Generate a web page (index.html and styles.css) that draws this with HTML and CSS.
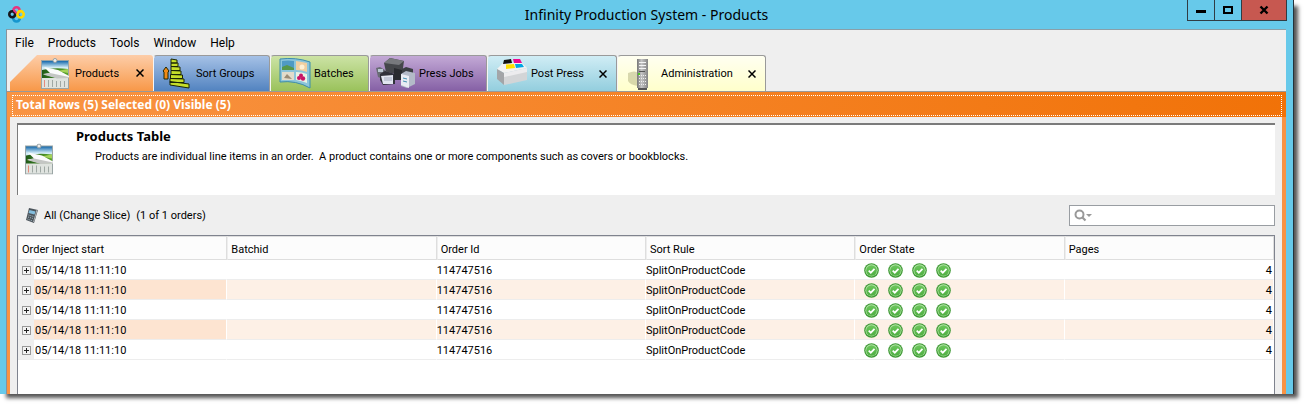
FILE: index.html
```html
<!DOCTYPE html>
<html lang="en">
<head>
<meta charset="utf-8">
<title>Infinity Production System - Products</title>
<link rel="stylesheet" href="styles.css">
</head>
<body>
<svg class="defs" aria-hidden="true">
  <defs>
    <linearGradient id="sky" x2="0" y2="1"><stop offset="0" stop-color="#1568ac"/><stop offset=".6" stop-color="#d4edf6"/></linearGradient>
    <linearGradient id="field"><stop offset="0" stop-color="#1f5a18"/><stop offset="1" stop-color="#5ca52c"/></linearGradient>
    <linearGradient id="ok-fill" x2="0" y2="1"><stop offset="0" stop-color="#6cc75c"/><stop offset="1" stop-color="#4fae42"/></linearGradient>
    <linearGradient id="metal"><stop offset="0" stop-color="#777"/><stop offset=".4" stop-color="#c4c4c4"/><stop offset="1" stop-color="#858585"/></linearGradient>
  </defs>
  <symbol id="calendar" viewBox="0 0 28 31">
    <path d="M0 2h28v29H0z" fill="#9aa5a5"/>
    <path d="M1 3h26v11H1z" fill="url(#sky)"/>
    <path d="M1 12q12-3 26-1v10H1z" fill="url(#field)"/>
    <path d="M16 13l11-2v4z" fill="#a5d25a"/>
    <path d="M1 20h26v10H1z" fill="#dfe3df"/>
    <path d="M7.500 22v7M11.500 22v7M15.500 23v6M19.500 23v6M23.500 23v6" stroke="#9fa8a4"/>
    <path d="M3.500 22v7" stroke="#e58a7c"/>
    <path d="M3 9l14 3 11 6v2l-12 0-14-4 7-1z" fill="#fbfbfb"/>
    <path d="M9 15l19 4v1l-12 .5-14-4z" fill="#c4c6c4"/>
    <circle cx="14" cy="2.500" r="2" fill="#eee" stroke="#96a0a3"/>
  </symbol>
  <symbol id="ok" viewBox="0 0 15 15">
    <circle cx="7.500" cy="7.500" r="7.300" fill="#3f9a35"/>
    <circle cx="7.500" cy="7.300" r="6.100" fill="#b4e3a8"/>
    <circle cx="7.500" cy="7.500" r="5.300" fill="url(#ok-fill)"/>
    <path d="M4.700 7.600l2.100 2.100 3.700-3.900" fill="none" stroke="#fff" stroke-width="1.700"/>
  </symbol>
  <symbol id="close" viewBox="0 0 8 8">
    <path d="M.5.5l7 7M7.500.5l-7 7" stroke="#000" stroke-width="1.500"/>
  </symbol>
</svg>

<div class="window">
  <header class="titlebar">
    <svg class="app-logo" viewBox="0 0 16 16" aria-hidden="true">
      <g fill="none" stroke-width="2.400">
        <circle cx="8" cy="11.400" r="3.200" stroke="#1696cf"/>
        <circle cx="8" cy="4.200" r="3" stroke="#e7347f"/>
        <circle cx="4" cy="7.800" r="2.800" stroke="#16171c"/>
        <circle cx="11.800" cy="7.800" r="3" stroke="#ffd800"/>
      </g>
      <path d="M5 4.800Q7 4 7.500 7" fill="none" stroke="#e7347f" stroke-width="2"/>
    </svg>
    <h1 class="title">Infinity Production System - Products</h1>
    <div class="window-buttons">
      <button class="win-btn" aria-label="Minimize"><svg width="10" height="10"><path d="M0 5h10v3H0z"/></svg></button>
      <button class="win-btn" aria-label="Maximize"><svg width="10" height="10"><path d="M1 2h8v6H1z" fill="none" stroke="#000" stroke-width="2"/></svg></button>
      <button class="win-btn win-close" aria-label="Close"><svg width="10" height="10"><path d="M1.500 1.500l7 7M8.500 1.500l-7 7" stroke="#000" stroke-width="2.400"/></svg></button>
    </div>
  </header>

  <div class="client">
    <nav class="menubar" aria-label="Main menu">
      <button>File</button><button>Products</button><button>Tools</button><button>Window</button><button>Help</button>
    </nav>

    <div class="tabs">
      <div class="tab tab-products">
        <button class="tab-main"><svg class="tab-icon" viewBox="0 0 28 31"><use href="#calendar"/></svg>Products</button>
        <button class="tab-close" aria-label="Close Products"><svg><use href="#close"/></svg></button>
      </div>
      <div class="tab tab-sort">
        <button class="tab-main"><svg class="tab-icon" viewBox="0 0 28 31">
          <g stroke="#1c2606" fill="#c6de2a" stroke-linejoin="round">
            <path d="M9 1l6 1v3H9zM9 5l7 0v3.500H9zM9 8.500l9 .5v3.500H9zM9 12.500l10 .5v3.500H9zM8.500 16.500l12 .5v3.500h-12zM8 20.500l14 .5v3.500H8zM8 23.500l19 2.500v4l-19-3z"/>
            <path d="M1 13l3-4 3 4-1 1v7H2v-7z" fill="#f18a16"/>
          </g></svg>Sort Groups</button>
      </div>
      <div class="tab tab-batches">
        <button class="tab-main"><svg class="tab-icon tab-icon-wide" viewBox="0 0 32 31">
          <path d="M1 1q16-2 30 3v26q-14-8-30-6z" fill="#8cc5da" stroke="#3b8bae"/>
          <path d="M3 3q6-1 12 0v9H3z" fill="#4f9ac4"/><path d="M3 9l5-2 7 3v2H3z" fill="#57984a"/>
          <path d="M17 3q6 1 11 2v9q-5-2-11-2z" fill="#f1cfa0"/><circle cx="23" cy="9" r="2.500" fill="#fff0d4"/>
          <path d="M3 14h12v8H3z" fill="#e2dccb"/><path d="M5 20l3-4 5 5z" fill="#9b8c75"/>
          <path d="M17 14q6 0 11 2v9q-5-2-11-3z" fill="#e9f2e4"/>
          <g fill="#c81465"><circle cx="22" cy="17.500" r="2"/><circle cx="20" cy="20" r="2"/><circle cx="24" cy="20.500" r="2.200"/></g>
        </svg>Batches</button>
      </div>
      <div class="tab tab-press">
        <button class="tab-main"><svg class="tab-icon tab-icon-press" viewBox="0 0 40 31">
          <path d="M8 5l6-5 14 3-2 14-16-3z" fill="#45474b"/><path d="M8 5l6-5 14 3-5 4z" fill="#77797d"/>
          <path d="M0 10l4-1 8 5-3 8-7-3z" fill="#686b74"/><path d="M2 11h5v3H2z" fill="#bac8d2"/>
          <path d="M4 16l5-3 10 3v10l-12 1-3-5z" fill="#30323a"/><path d="M5 18l12-1v9H7z" fill="#e1e5ef"/><path d="M8 20h8M8 22h8" stroke="#a3acc0"/>
          <path d="M18 10l8 2v10h-8z" fill="#292b2f"/>
          <path d="M26 11l4-2 7 2v6l-11-2z" fill="#3b3e43"/>
          <path d="M25 16l5-3 9 2v11l-8 4-6-2z" fill="#b3bac8"/><path d="M25 16l8 2v12l-8-3z" fill="#e9ecf3"/>
          <path d="M27 20l4 1M27 23l4 1" stroke="#4590b2"/>
        </svg>Press Jobs</button>
      </div>
      <div class="tab tab-post">
        <button class="tab-main"><svg class="tab-icon tab-icon-wide" viewBox="0 0 32 31">
          <path d="M1 11l6-6 19 0 5 5-23 5z" fill="#f2f2f2"/>
          <path d="M1 11l7 4v12l-7-6z" fill="#a3a5a8"/><path d="M8 15l23-5v12L8 27z" fill="#d3d5d7"/>
          <path d="M8 15l23-5v4L8 19z" fill="#ececee"/>
          <path d="M8 2l7-1 1 4-9 1z" fill="#111"/><path d="M17 1l7 0 2 4-8 0z" fill="#ec0a91"/>
          <path d="M10 6.500l8-.5 1 4-9 1z" fill="#ffe000"/><path d="M19 6l7 0 2 3-8 1z" fill="#00a6e2"/>
        </svg>Post Press</button>
        <button class="tab-close" aria-label="Close Post Press"><svg><use href="#close"/></svg></button>
      </div>
      <div class="tab tab-admin">
        <button class="tab-main"><svg class="tab-icon tab-icon-tower" viewBox="0 0 20 32">
          <path d="M0 15q7-3 10 0v13Q2 27 0 23z" fill="#a9a875" opacity=".45"/>
          <path d="M9 1h11v29H9z" fill="url(#metal)"/><path d="M10 30h9v2h-9z" fill="#555"/>
          <path d="M11 4.500h7M11 7.500h7M11 10.500h7" stroke="#f4f4f4"/><path d="M11 13.500h6" stroke="#555"/>
          <path d="M11 17.500h7M11 20.500h7M11 23.500h7M11 26.500h7" stroke="#eee" stroke-dasharray="1 1"/>
          <path d="M10 15h2v2h-2z" fill="#4dc923"/>
        </svg>Administration</button>
        <button class="tab-close" aria-label="Close Administration"><svg><use href="#close"/></svg></button>
      </div>
    </div>

    <main class="workspace">
      <div class="status"><p>Total Rows (5) Selected (0) Visible (5)</p></div>
      <div class="content">
        <section class="info">
          <svg class="info-icon" viewBox="0 0 28 31" aria-hidden="true"><use href="#calendar"/></svg>
          <div>
            <h2>Products Table</h2>
            <p>Products are individual line items in an order.&nbsp; A product contains one or more components such as covers or bookblocks.</p>
          </div>
        </section>

        <div class="toolbar">
          <button class="slice">
            <svg width="12" height="15" viewBox="0 0 12 15" aria-hidden="true"><path d="M3 0l9 2-4 13-8-3z" fill="#4c545b"/><path d="M3.500 2l6 1.500-1 3-6-1.500z" fill="#83bddd"/><path d="M2.500 7l5 1.500M2 9l5 1.500M1.500 11l5 2" stroke="#a7bfca" stroke-dasharray="1 1"/><path d="M11 2L7.500 14" stroke="#b0b5b8"/></svg>
            All (Change Slice)
          </button>
          <span>(1 of 1 orders)</span>
          <label class="search">
            <svg width="18" height="13" viewBox="0 0 18 13" aria-hidden="true"><circle cx="5.500" cy="5.500" r="4" fill="none" stroke="#999" stroke-width="2"/><path d="M8.500 8.500l3 3" stroke="#999" stroke-width="2.200"/><path d="M12 5h6l-3 3z" fill="#999"/></svg>
            <input type="text" aria-label="Search products">
          </label>
        </div>

        <div class="grid">
          <table>
            <thead>
              <tr><th>Order Inject start</th><th>Batchid</th><th>Order Id</th><th>Sort Rule</th><th>Order State</th><th>Pages</th></tr>
            </thead>
            <tbody>
              <tr><td class="start"><button class="expand" aria-label="Expand row"></button>05/14/18 11:11:10</td><td></td><td>114747516</td><td>SplitOnProductCode</td><td><div class="states"><svg><use href="#ok"/></svg><svg><use href="#ok"/></svg><svg><use href="#ok"/></svg><svg><use href="#ok"/></svg></div></td><td class="pages">4</td></tr>
              <tr><td class="start"><button class="expand" aria-label="Expand row"></button>05/14/18 11:11:10</td><td></td><td>114747516</td><td>SplitOnProductCode</td><td><div class="states"><svg><use href="#ok"/></svg><svg><use href="#ok"/></svg><svg><use href="#ok"/></svg><svg><use href="#ok"/></svg></div></td><td class="pages">4</td></tr>
              <tr><td class="start"><button class="expand" aria-label="Expand row"></button>05/14/18 11:11:10</td><td></td><td>114747516</td><td>SplitOnProductCode</td><td><div class="states"><svg><use href="#ok"/></svg><svg><use href="#ok"/></svg><svg><use href="#ok"/></svg><svg><use href="#ok"/></svg></div></td><td class="pages">4</td></tr>
              <tr><td class="start"><button class="expand" aria-label="Expand row"></button>05/14/18 11:11:10</td><td></td><td>114747516</td><td>SplitOnProductCode</td><td><div class="states"><svg><use href="#ok"/></svg><svg><use href="#ok"/></svg><svg><use href="#ok"/></svg><svg><use href="#ok"/></svg></div></td><td class="pages">4</td></tr>
              <tr><td class="start"><button class="expand" aria-label="Expand row"></button>05/14/18 11:11:10</td><td></td><td>114747516</td><td>SplitOnProductCode</td><td><div class="states"><svg><use href="#ok"/></svg><svg><use href="#ok"/></svg><svg><use href="#ok"/></svg><svg><use href="#ok"/></svg></div></td><td class="pages">4</td></tr>
            </tbody>
          </table>
        </div>
      </div>
    </main>
  </div>
</div>
</body>
</html>
```

FILE: styles.css
```css
* { box-sizing: border-box; }

body {
  margin: 0;
  height: 100vh;
  padding: 0 15px 15px 0;
  background: #fff;
  font: 11px/15px Roboto, "Noto Sans", sans-serif;
  color: #000;
  overflow: hidden;
}

h1, h2, p { margin: 0; }

button {
  margin: 0;
  padding: 0;
  border: 0;
  background: none;
  color: inherit;
  font: inherit;
}

.defs { position: absolute; width: 0; height: 0; }

.window {
  display: flex;
  flex-direction: column;
  height: 100%;
  background: #67c9ea;
  border-right: 1px solid #23333b;
  box-shadow: 5px 5px 4px -1px #555;
}

/* Title bar */
.titlebar {
  display: grid;
  grid-template-columns: 1fr auto 1fr;
  height: 29px;
  padding: 0 6px;
}

.app-logo { width: 17px; height: 17px; margin-top: 6px; margin-left: 2px; }

.title {
  font: 400 14px/30px "Noto Sans", "Open Sans", sans-serif;
}

.window-buttons { display: flex; justify-self: end; height: 21px; }

.win-btn {
  display: flex;
  align-items: center;
  justify-content: center;
  width: 27px;
  border: 1px solid #303c43;
  border-width: 0 0 1px 1px;
}

.win-close { width: 46px; border-right-width: 1px; background: #c75850; }

/* Client area */
.client {
  display: flex;
  flex: 1;
  flex-direction: column;
  min-height: 0;
  margin: 0 7px 0 6px;
  border-top: 1px solid #8a9fa8;
  border-left: 1px solid #8a929a;
  background: #efefef;
}

.menubar {
  display: flex;
  gap: 14px;
  height: 25px;
  padding-left: 8px;
  font-size: 12px;
  line-height: 24px;
}

/* Tabs */
.tabs {
  display: flex;
  height: 36px;
  padding-left: 3px;
}

.tab {
  display: flex;
  align-items: center;
  justify-content: space-between;
  border: 1px solid #9a9a9a;
  border-bottom: 0;
  border-left-color: #f5f5f5;
  border-radius: 4px 3px 0 0;
  padding-right: 9px;
}

.tab-main { display: flex; align-items: center; gap: 6px; white-space: nowrap; }
.tab-icon { width: 28px; height: 31px; }
.tab-icon-wide { width: 32px; }
.tab-icon-press { width: 40px; }
.tab-icon-tower { width: 20px; height: 32px; }
.tab-close, .tab-close svg { display: block; width: 8px; height: 8px; }

.tab-products {
  width: 143px;
  padding-left: 31px;
  border: 0;
  background: linear-gradient(#fdcda8, #f89848);
  clip-path: polygon(0 27px, 27px 0, 100% 0, 100% 100%, 0 100%);
}
.tab-sort { width: 117px; padding-left: 8px; background: linear-gradient(#a5c1e6, #5283c0); }
.tab-batches { width: 99px; padding-left: 8px; background: linear-gradient(#cce3a5, #9ac25b); }
.tab-batches .tab-main { gap: 3px; }
.tab-press { width: 118px; padding-left: 6px; background: linear-gradient(#c3a9d6, #8560a5); }
.tab-press .tab-main { gap: 3px; }
.tab-post { width: 130px; padding-left: 8px; background: linear-gradient(#d0edf5, #93cede); }
.tab-post .tab-main { gap: 3px; }
.tab-admin { width: 149px; padding-left: 10px; background: linear-gradient(#fffff1, #ffffcb); }
.tab-admin .tab-main { gap: 13px; }

/* Workspace */
.workspace {
  display: flex;
  flex: 1;
  flex-direction: column;
  min-height: 0;
  border-top: 1px solid #999;
}

.status {
  height: 25px;
  padding: 3px 4px 1px 5px;
  background: linear-gradient(90deg, #f99443, #f17208);
}

.status p {
  height: 21px;
  padding-left: 3px;
  border: 1px dotted #fff;
  color: #fff;
  font: bold 12px/18px "Noto Sans", sans-serif;
}

.content {
  display: flex;
  flex: 1;
  flex-direction: column;
  min-height: 0;
  padding: 6px 7px 0;
  border: solid #fa9343;
  border-width: 0 4px 0 3px;
}

.info {
  display: flex;
  height: 72px;
  padding: 3px 7px;
  border: 1px solid #7b7b7b;
  border-width: 2px 0 0 1px;
  background: #fff;
}

.info-icon { width: 28px; height: 32px; margin-top: 15px; margin-right: 23px; }
.info h2 { font: bold 13px/16px "Noto Sans", sans-serif; }
.info p { margin-top: 5px; padding-left: 19px; }

.toolbar {
  display: flex;
  align-items: center;
  gap: 6px;
  height: 40px;
  padding-left: 9px;
}

.slice { display: flex; align-items: center; gap: 6px; }

.search {
  display: flex;
  align-items: center;
  width: 206px;
  height: 21px;
  margin-left: auto;
  padding-left: 4px;
  border: 1px solid #999da2;
  background: #fff;
}

.search input {
  flex: 1;
  min-width: 0;
  border: 0;
  outline: 0;
  background: none;
  font: inherit;
}

/* Product rows */
.grid {
  flex: 1;
  min-height: 0;
  overflow: hidden;
  border: 1px solid #7f838e;
  border-bottom: 0;
  background: #fff;
}

table { width: 100%; table-layout: fixed; border-collapse: separate; border-spacing: 0; }

th {
  height: 24px;
  padding: 2px 3px 0;
  border: 1px solid #dedede;
  border-left-color: #eee;
  background: #fcfcfc;
  font-weight: 400;
  text-align: left;
}

td {
  height: 20px;
  padding: 1px 1px 0 0;
  border-bottom: 1px solid #ededed;
  border-right: 1px solid #fff;
}

tbody tr:nth-child(even) td { background: #fdf0e6; }
tbody tr:nth-child(even) .start { background: linear-gradient(90deg, #efefef 16px, #fde4d1 16px); }

.start { padding-left: 4px; background: linear-gradient(90deg, #efefef 16px, #fff 16px); }

.expand {
  width: 9px;
  height: 9px;
  margin-right: 4px;
  border: 1px solid #999;
  background:
    linear-gradient(#222, #222) center / 5px 1px no-repeat,
    linear-gradient(#222, #222) center / 1px 5px no-repeat,
    #f2f2f2;
}

.states { display: flex; gap: 9px; padding-left: 9px; }
.states svg { width: 15px; height: 15px; }
.pages { text-align: right; }
```
